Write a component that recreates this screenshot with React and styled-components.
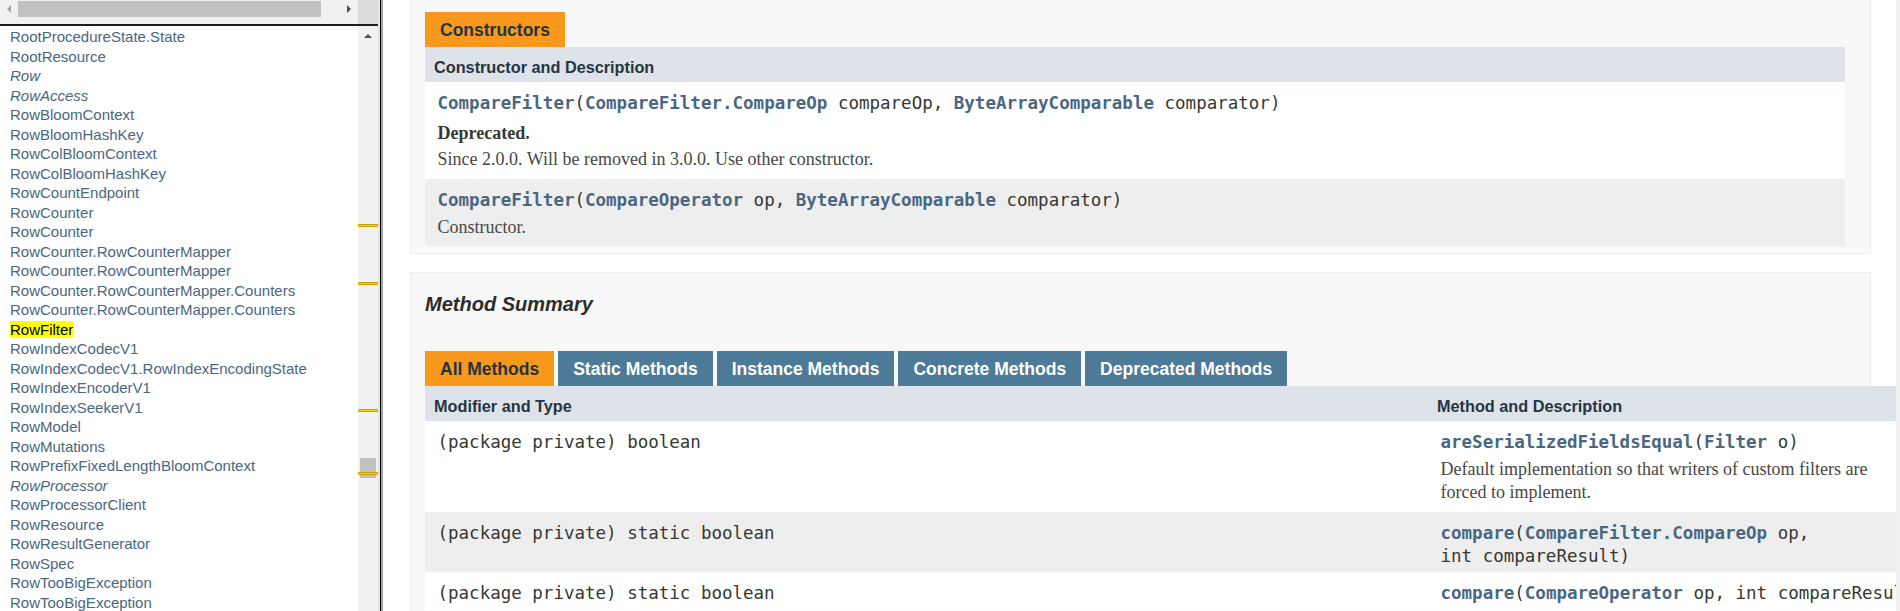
import React from "react";
import styled, { createGlobalStyle } from "styled-components";

// =============================================================================
// Global
// =============================================================================

const GlobalStyle = createGlobalStyle`
  html, body {
    margin: 0;
    padding: 0;
    background: #ffffff;
    overflow: hidden;
  }
  body {
    font-family: "Liberation Sans", Arial, sans-serif;
  }
`;

const SANS = `"Liberation Sans", Arial, sans-serif`;
const MONO = `"DejaVu Sans Mono", "Liberation Mono", monospace`;
const SERIF = `"Liberation Serif", Georgia, serif`;

// =============================================================================
// Page frames
// =============================================================================

const Page = styled.div`
  display: flex;
  width: 1900px;
  height: 611px;
  overflow: hidden;
`;

const NavFrame = styled.div`
  flex: none;
  width: 378px;
  display: flex;
  flex-direction: column;
  background: #ffffff;
  border-right: 2px solid #e6e6e6;
`;

const FrameDivider = styled.div`
  flex: none;
  width: 2px;
  background: #a3a3a3;
  border-left: 1px solid #000000;
`;

const DocFrame = styled.div`
  flex: 1;
  min-width: 0;
  display: flex;
`;

const DocScroll = styled.div`
  flex: 1;
  min-width: 0;
  overflow: hidden;
  padding: 0 25px 0 27px;
`;

const EdgeStrip = styled.div`
  flex: none;
  width: 4px;
  background: #f1f1f1;
`;

// =============================================================================
// Scroll bars (left frame)
// =============================================================================

const HBar = styled.div`
  flex: none;
  display: flex;
  height: 24px;
  background: #f1f1f1;
  border-bottom: 2px solid #1c1c1c;
`;

const HTrack = styled.div`
  flex: 1;
  display: flex;
  align-items: flex-start;
  height: 17px;
`;

const HThumbArea = styled.div`
  flex: 1;
  display: flex;
  align-items: center;
  height: 17px;
`;

const HThumb = styled.div`
  width: 303px;
  height: 16px;
  background: #c1c1c1;
`;

const ArrowBtn = styled.div`
  flex: none;
  width: ${({ $w }) => $w || 18}px;
  height: ${({ $h }) => $h || 17}px;
  display: flex;
  align-items: center;
  justify-content: center;
`;

const Corner = styled.div`
  flex: none;
  width: 20px;
  background: #dcdcdc;
`;

const ClassArea = styled.div`
  flex: 1;
  min-height: 0;
  display: flex;
`;

const VScroll = styled.div`
  flex: none;
  position: relative;
  width: 20px;
  background: #f1f1f1;
`;

const VThumb = styled.div`
  position: absolute;
  left: 2px;
  top: 432px;
  width: 16px;
  height: 20px;
  background: #c1c1c1;
`;

const FindMark = styled.div`
  position: absolute;
  left: 0;
  right: 0;
  top: ${({ $top }) => $top}px;
  height: 3px;
  box-sizing: border-box;
  background: #f7d400;
  border-top: 1px solid #c9a400;
  border-bottom: 1px solid #c9a400;
`;

// =============================================================================
// Class list
// =============================================================================

const ClassList = styled.ul`
  flex: 1;
  min-width: 0;
  margin: 0;
  padding: 1px 0 0 10px;
  list-style: none;
  overflow: hidden;
`;

const ClassItem = styled.li`
  font-family: ${SANS};
  font-size: 15px;
  line-height: 19.5px;
  color: #4a6782;
  white-space: nowrap;
  font-style: ${({ $italic }) => ($italic ? "italic" : "normal")};
`;

const FoundText = styled.span`
  background: #ffff00;
  color: #000000;
`;

// =============================================================================
// Summary blocks
// =============================================================================

const SummaryBox = styled.section`
  background: #f8f8f8;
  border: 1px solid #ededed;
  border-top: ${({ $cut }) => ($cut ? "none" : "1px solid #ededed")};
  padding: ${({ $cut }) => ($cut ? "12px" : "0")} 25px 7px 14px;
  margin-bottom: 18px;
`;

const SectionTitle = styled.h3`
  margin: 20px 0 35px;
  font-family: ${SANS};
  font-size: 20px;
  line-height: 23px;
  font-weight: bold;
  font-style: italic;
  color: #2c2c2c;
`;

const TabRow = styled.div`
  display: flex;
  gap: 4px;
`;

const Tab = styled.span`
  box-sizing: border-box;
  height: 35px;
  padding: 8px 15px 7px;
  font-family: ${SANS};
  font-size: 17.5px;
  line-height: 20px;
  font-weight: bold;
  white-space: nowrap;
  background: ${({ $active }) => ($active ? "#f8981d" : "#4d7a97")};
  color: ${({ $active }) => ($active ? "#253441" : "#ffffff")};
`;

const Table = styled.table`
  width: ${({ $width }) => $width || "100%"};
  border-collapse: collapse;
  border-spacing: 0;
  table-layout: fixed;
`;

const Th = styled.th`
  box-sizing: border-box;
  width: ${({ $width }) => $width || "auto"};
  padding: 10px 3px 4px 9px;
  background: #dee3e9;
  text-align: left;
  font-family: ${SANS};
  font-size: 16.25px;
  line-height: 21px;
  font-weight: bold;
  color: #253441;
  white-space: nowrap;
`;

const Tr = styled.tr`
  background: ${({ $shade }) => ($shade ? "#eeeeee" : "#ffffff")};
`;

const Td = styled.td`
  padding: 10px 4px 4.5px 12.5px;
  vertical-align: top;
  text-align: left;
`;

const Code = styled.code`
  display: block;
  font-family: ${MONO};
  font-size: 17.5px;
  line-height: 23px;
  color: #353833;
`;

const Link = styled.span`
  font-weight: bold;
  color: #4a6782;
`;

const Block = styled.div`
  margin: 4px 12px 3px 0;
  max-width: ${({ $max }) => $max || "none"};
  font-family: ${SERIF};
  font-size: 18px;
  line-height: 23px;
  color: #474747;
`;

const DeprecatedLabel = styled.span`
  display: block;
  padding-top: 3px;
  font-weight: bold;
  color: #353833;
`;

const DeprecationComment = styled.span`
  display: block;
  padding-top: 3px;
`;

// =============================================================================
// Data
// =============================================================================

const classes = [
  { name: "RootProcedureState.State" },
  { name: "RootResource" },
  { name: "Row", italic: true },
  { name: "RowAccess", italic: true },
  { name: "RowBloomContext" },
  { name: "RowBloomHashKey" },
  { name: "RowColBloomContext" },
  { name: "RowColBloomHashKey" },
  { name: "RowCountEndpoint" },
  { name: "RowCounter" },
  { name: "RowCounter" },
  { name: "RowCounter.RowCounterMapper" },
  { name: "RowCounter.RowCounterMapper" },
  { name: "RowCounter.RowCounterMapper.Counters" },
  { name: "RowCounter.RowCounterMapper.Counters" },
  { name: "RowFilter", found: true },
  { name: "RowIndexCodecV1" },
  { name: "RowIndexCodecV1.RowIndexEncodingState" },
  { name: "RowIndexEncoderV1" },
  { name: "RowIndexSeekerV1" },
  { name: "RowModel" },
  { name: "RowMutations" },
  { name: "RowPrefixFixedLengthBloomContext" },
  { name: "RowProcessor", italic: true },
  { name: "RowProcessorClient" },
  { name: "RowResource" },
  { name: "RowResultGenerator" },
  { name: "RowSpec" },
  { name: "RowTooBigException" },
  { name: "RowTooBigException" },
];

// scroll-bar find markers, px from top of the track
const findMarks = [198, 255.5, 383, 446];

const methodTabs = [
  { label: "All Methods", active: true },
  { label: "Static Methods" },
  { label: "Instance Methods" },
  { label: "Concrete Methods" },
  { label: "Deprecated Methods" },
];

const NB = "\u00a0";

// =============================================================================
// Arrows
// =============================================================================

const Arrow = ({ dir, color }) => {
  const points = {
    left: "4,0 4,8 0,4",
    right: "0,0 0,8 4,4",
    up: "0,4 8,4 4,0",
  }[dir];
  const w = dir === "up" ? 8 : 4;
  const h = dir === "up" ? 4 : 8;
  return (
    <svg width={w} height={h} viewBox={`0 0 ${w} ${h}`}>
      <polygon points={points} fill={color} />
    </svg>
  );
};

// =============================================================================
// Page
// =============================================================================

export default function App() {
  return (
    <>
      <GlobalStyle />
      <Page>
        <NavFrame>
          <HBar>
            <HTrack>
              <ArrowBtn>
                <Arrow dir="left" color="#a3a3a3" />
              </ArrowBtn>
              <HThumbArea>
                <HThumb />
              </HThumbArea>
              <ArrowBtn>
                <Arrow dir="right" color="#505050" />
              </ArrowBtn>
            </HTrack>
            <Corner />
          </HBar>

          <ClassArea>
            <ClassList>
              {classes.map((c, i) => (
                <ClassItem key={i} $italic={c.italic}>
                  {c.found ? <FoundText>{c.name}</FoundText> : c.name}
                </ClassItem>
              ))}
            </ClassList>
            <VScroll>
              <ArrowBtn $w={20} $h={20}>
                <Arrow dir="up" color="#505050" />
              </ArrowBtn>
              <VThumb />
              {findMarks.map((top) => (
                <FindMark key={top} $top={top} />
              ))}
            </VScroll>
          </ClassArea>
        </NavFrame>

        <FrameDivider />

        <DocFrame>
          <DocScroll>
            {/* Constructor summary */}
            <SummaryBox $cut>
              <TabRow>
                <Tab $active>Constructors</Tab>
              </TabRow>
              <Table>
                <thead>
                  <tr>
                    <Th>Constructor and Description</Th>
                  </tr>
                </thead>
                <tbody>
                  <Tr>
                    <Td>
                      <Code>
                        <Link>CompareFilter</Link>(<Link>CompareFilter.CompareOp</Link>
                        {NB}compareOp, <Link>ByteArrayComparable</Link>
                        {NB}comparator)
                      </Code>
                      <Block>
                        <DeprecatedLabel>Deprecated.</DeprecatedLabel>
                        <DeprecationComment>
                          Since 2.0.0. Will be removed in 3.0.0. Use other constructor.
                        </DeprecationComment>
                      </Block>
                    </Td>
                  </Tr>
                  <Tr $shade>
                    <Td>
                      <Code>
                        <Link>CompareFilter</Link>(<Link>CompareOperator</Link>
                        {NB}op, <Link>ByteArrayComparable</Link>
                        {NB}comparator)
                      </Code>
                      <Block>Constructor.</Block>
                    </Td>
                  </Tr>
                </tbody>
              </Table>
            </SummaryBox>

            {/* Method summary */}
            <SummaryBox>
              <SectionTitle>Method Summary</SectionTitle>
              <TabRow>
                {methodTabs.map((t) => (
                  <Tab key={t.label} $active={t.active}>
                    {t.label}
                  </Tab>
                ))}
              </TabRow>
              <Table $width="1520px">
                <thead>
                  <tr>
                    <Th $width="1003px">Modifier and Type</Th>
                    <Th>Method and Description</Th>
                  </tr>
                </thead>
                <tbody>
                  <Tr>
                    <Td>
                      <Code>(package private) boolean</Code>
                    </Td>
                    <Td>
                      <Code>
                        <Link>areSerializedFieldsEqual</Link>(<Link>Filter</Link>
                        {NB}o)
                      </Code>
                      <Block $max="455px">
                        Default implementation so that writers of custom filters
                        are forced to implement.
                      </Block>
                    </Td>
                  </Tr>
                  <Tr $shade>
                    <Td>
                      <Code>(package private) static boolean</Code>
                    </Td>
                    <Td>
                      <Code>
                        <Link>compare</Link>(<Link>CompareFilter.CompareOp</Link>
                        {NB}op, int{NB}compareResult)
                      </Code>
                    </Td>
                  </Tr>
                  <Tr>
                    <Td>
                      <Code>(package private) static boolean</Code>
                    </Td>
                    <Td>
                      <Code>
                        <Link>compare</Link>(<Link>CompareOperator</Link>
                        {NB}op, int{NB}compareResult)
                      </Code>
                    </Td>
                  </Tr>
                </tbody>
              </Table>
            </SummaryBox>
          </DocScroll>
          <EdgeStrip />
        </DocFrame>
      </Page>
    </>
  );
}
